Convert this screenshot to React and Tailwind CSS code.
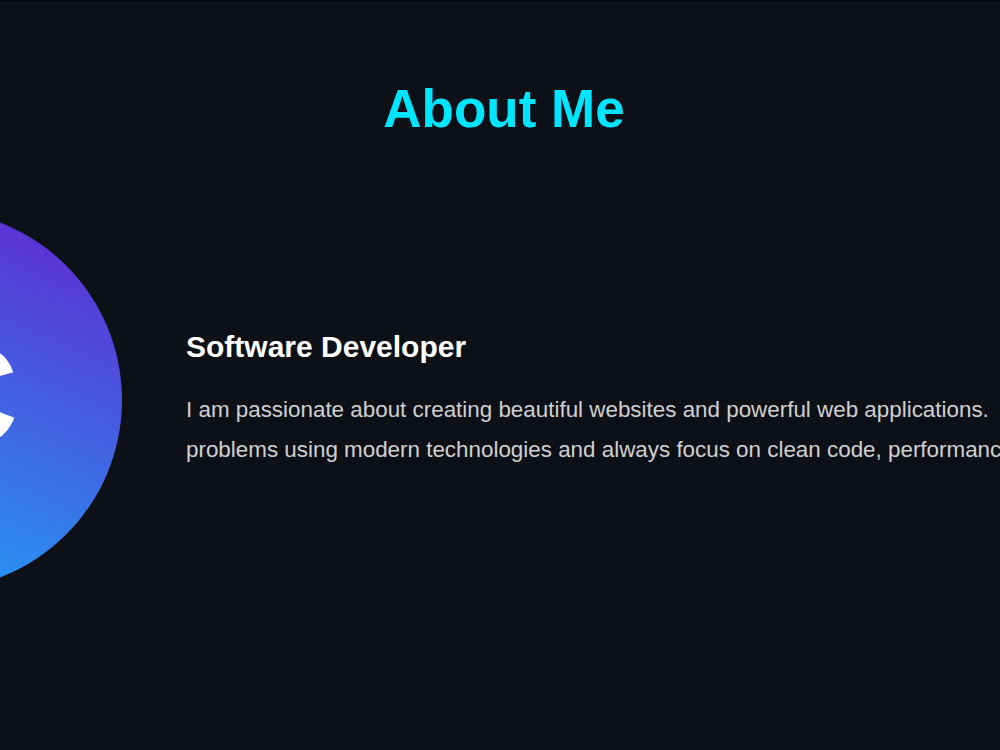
export default function App() {
  return (
    <div className="w-[1000px] h-[750px] overflow-hidden bg-[#0d1017] border-t border-[#050509] font-['Liberation_Sans',Arial,sans-serif]">
      <h1 className="pt-[78px] text-center text-[53px] leading-[1.15] font-bold text-[#00e5ff] pl-[8px]">
        About Me
      </h1>
      <div className="flex items-center gap-16 mt-[70px] ml-[-258px] w-[1600px]">
        <div className="w-[380px] h-[380px] shrink-0 rounded-full bg-[linear-gradient(204deg,#6324d0,#19b0fa)] flex items-center justify-center overflow-hidden">
          <span className="ml-[70px] mt-[-8px] text-[142px] font-bold text-white leading-none">C</span>
        </div>
        <div className="w-[1300px] shrink-0">
          <h3 className="text-[30px] font-bold text-white leading-[1.2]">Software Developer</h3>
          <p className="mt-[25px] text-[22.4px] leading-[40px] text-[#d0d0d0]">
            I am passionate about creating beautiful websites and powerful web applications.
            <br />
            problems using modern technologies and always focus on clean code, performance and user experience.
          </p>
        </div>
      </div>
    </div>
  );
}
